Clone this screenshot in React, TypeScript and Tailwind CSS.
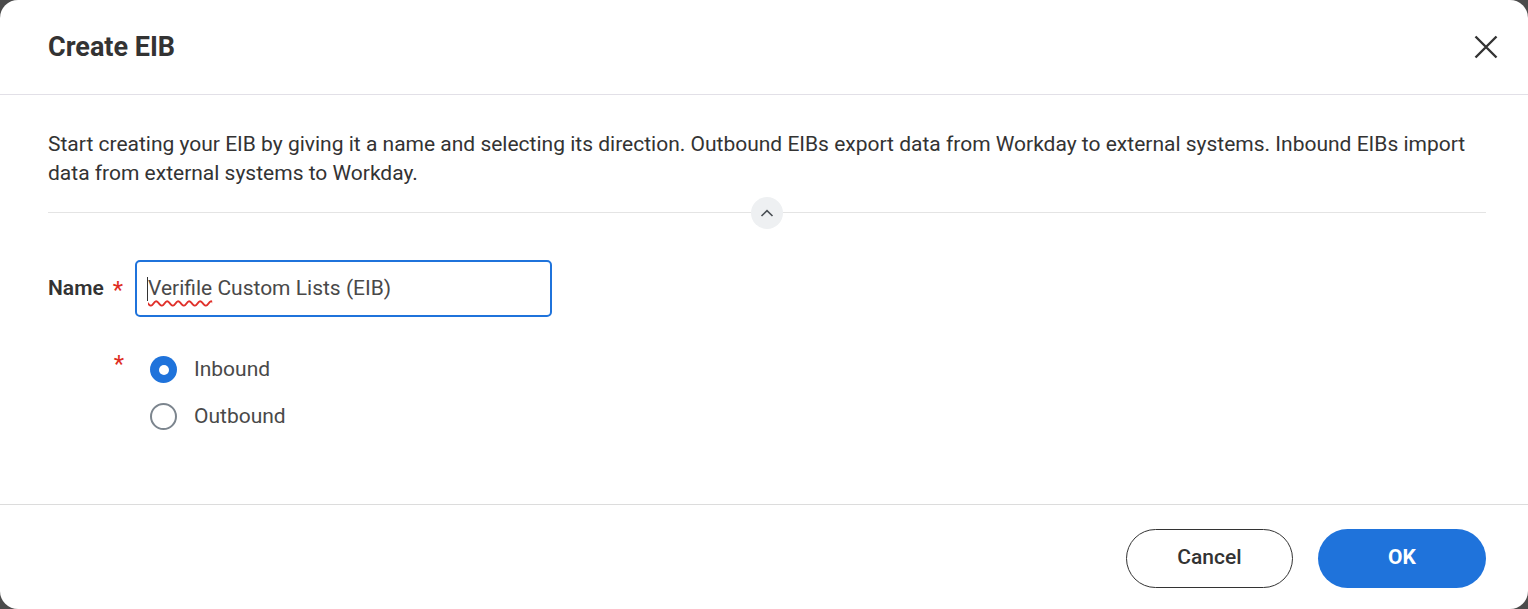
import React from "react";

const font = { fontFamily: "Roboto, 'Noto Sans', Arial, sans-serif" };

function CloseIcon() {
  return (
    <svg width="24" height="24" viewBox="0 0 24 24" fill="none" aria-hidden>
      <path d="M1.5 1.5L22.5 22.5M22.5 1.5L1.5 22.5" stroke="#333333" strokeWidth="2.4" />
    </svg>
  );
}

function ChevronUp() {
  return (
    <svg width="14" height="8" viewBox="0 0 14 8" fill="none" aria-hidden>
      <path d="M1.5 7L7 1.6L12.5 7" stroke="#4a4f55" strokeWidth="1.6" />
    </svg>
  );
}

function Radio({ checked, label }: { checked?: boolean; label: string }) {
  return (
    <label className="flex h-[47px] items-center gap-[17px]">
      {checked ? (
        <span className="flex h-[27px] w-[27px] items-center justify-center rounded-full bg-[#1f73db]">
          <span className="h-[10px] w-[10px] rounded-full bg-white" />
        </span>
      ) : (
        <span className="h-[27px] w-[27px] rounded-full border-2 border-[#7c858e] bg-white" />
      )}
      <span className="text-[21px] text-[#494949]">{label}</span>
    </label>
  );
}

export default function App() {
  return (
    <div className="h-[609px] w-[1528px] bg-[#4b4b4b]" style={font}>
      <div className="flex h-[609px] w-full flex-col overflow-hidden rounded-[18px] bg-white text-[#333333]">
        {/* header */}
        <div className="flex h-[95px] shrink-0 items-center justify-between border-b border-[#e2e0e7] pl-12 pr-[30px]">
          <h1 className="text-[27px] font-bold">Create EIB</h1>
          <button type="button" className="flex h-[24px] w-[24px] items-center justify-center">
            <CloseIcon />
          </button>
        </div>

        {/* body */}
        <div className="flex-1 pl-12 pr-[42px] pt-[35px]">
          <p className="text-[21px] leading-[29px] text-[#333333]">
            Start creating your EIB by giving it a name and selecting its direction. Outbound EIBs export data from
            Workday to external systems. Inbound EIBs import data from external systems to Workday.
          </p>

          <div className="relative mt-[24px] border-t border-[#e4e4e4]">
            <button
              type="button"
              className="absolute left-1/2 top-[-16px] flex h-[32px] w-[32px] -translate-x-1/2 items-center justify-center rounded-full bg-[#eef0f2]"
            >
              <ChevronUp />
            </button>
          </div>

          <div className="mt-[47px] grid grid-cols-[87px_1fr]">
            {/* name row */}
            <div className="flex h-[57px] items-center gap-[9px]">
              <span className="text-[21px] font-semibold">Name</span>
              <span className="mt-[2px] text-[24px] leading-none text-[#de2d22]">*</span>
            </div>
            <div className="flex h-[57px] w-[417px] items-center rounded-[5px] border-2 border-[#1f73db] pl-[10px]">
              <span className="h-[24px] w-px bg-[#333333]" />
              <span className="text-[21px] text-[#494949]">
                <span className="underline decoration-[#e0302a] decoration-wavy decoration-[1.5px] underline-offset-[5px]">
                  Verifile
                </span>{" "}
                Custom Lists (EIB)
              </span>
            </div>

            {/* direction row */}
            <div className="mt-[29px] flex justify-end pr-[11px] pt-[6px]">
              <span className="text-[24px] leading-none text-[#de2d22]">*</span>
            </div>
            <div className="mt-[29px] flex flex-col pl-[15px]">
              <Radio checked label="Inbound" />
              <Radio label="Outbound" />
            </div>
          </div>
        </div>

        {/* footer */}
        <div className="flex h-[105px] shrink-0 items-center justify-end gap-[25px] border-t border-[#dcdcdc] pr-[42px] pt-[2px]">
          <button
            type="button"
            className="h-[59px] w-[167px] rounded-full border-[1.5px] border-[#333333] bg-white text-[21px] font-medium text-[#333333]"
          >
            Cancel
          </button>
          <button type="button" className="h-[59px] w-[168px] rounded-full bg-[#1f73db] text-[21px] font-bold text-white">
            OK
          </button>
        </div>
      </div>
    </div>
  );
}
